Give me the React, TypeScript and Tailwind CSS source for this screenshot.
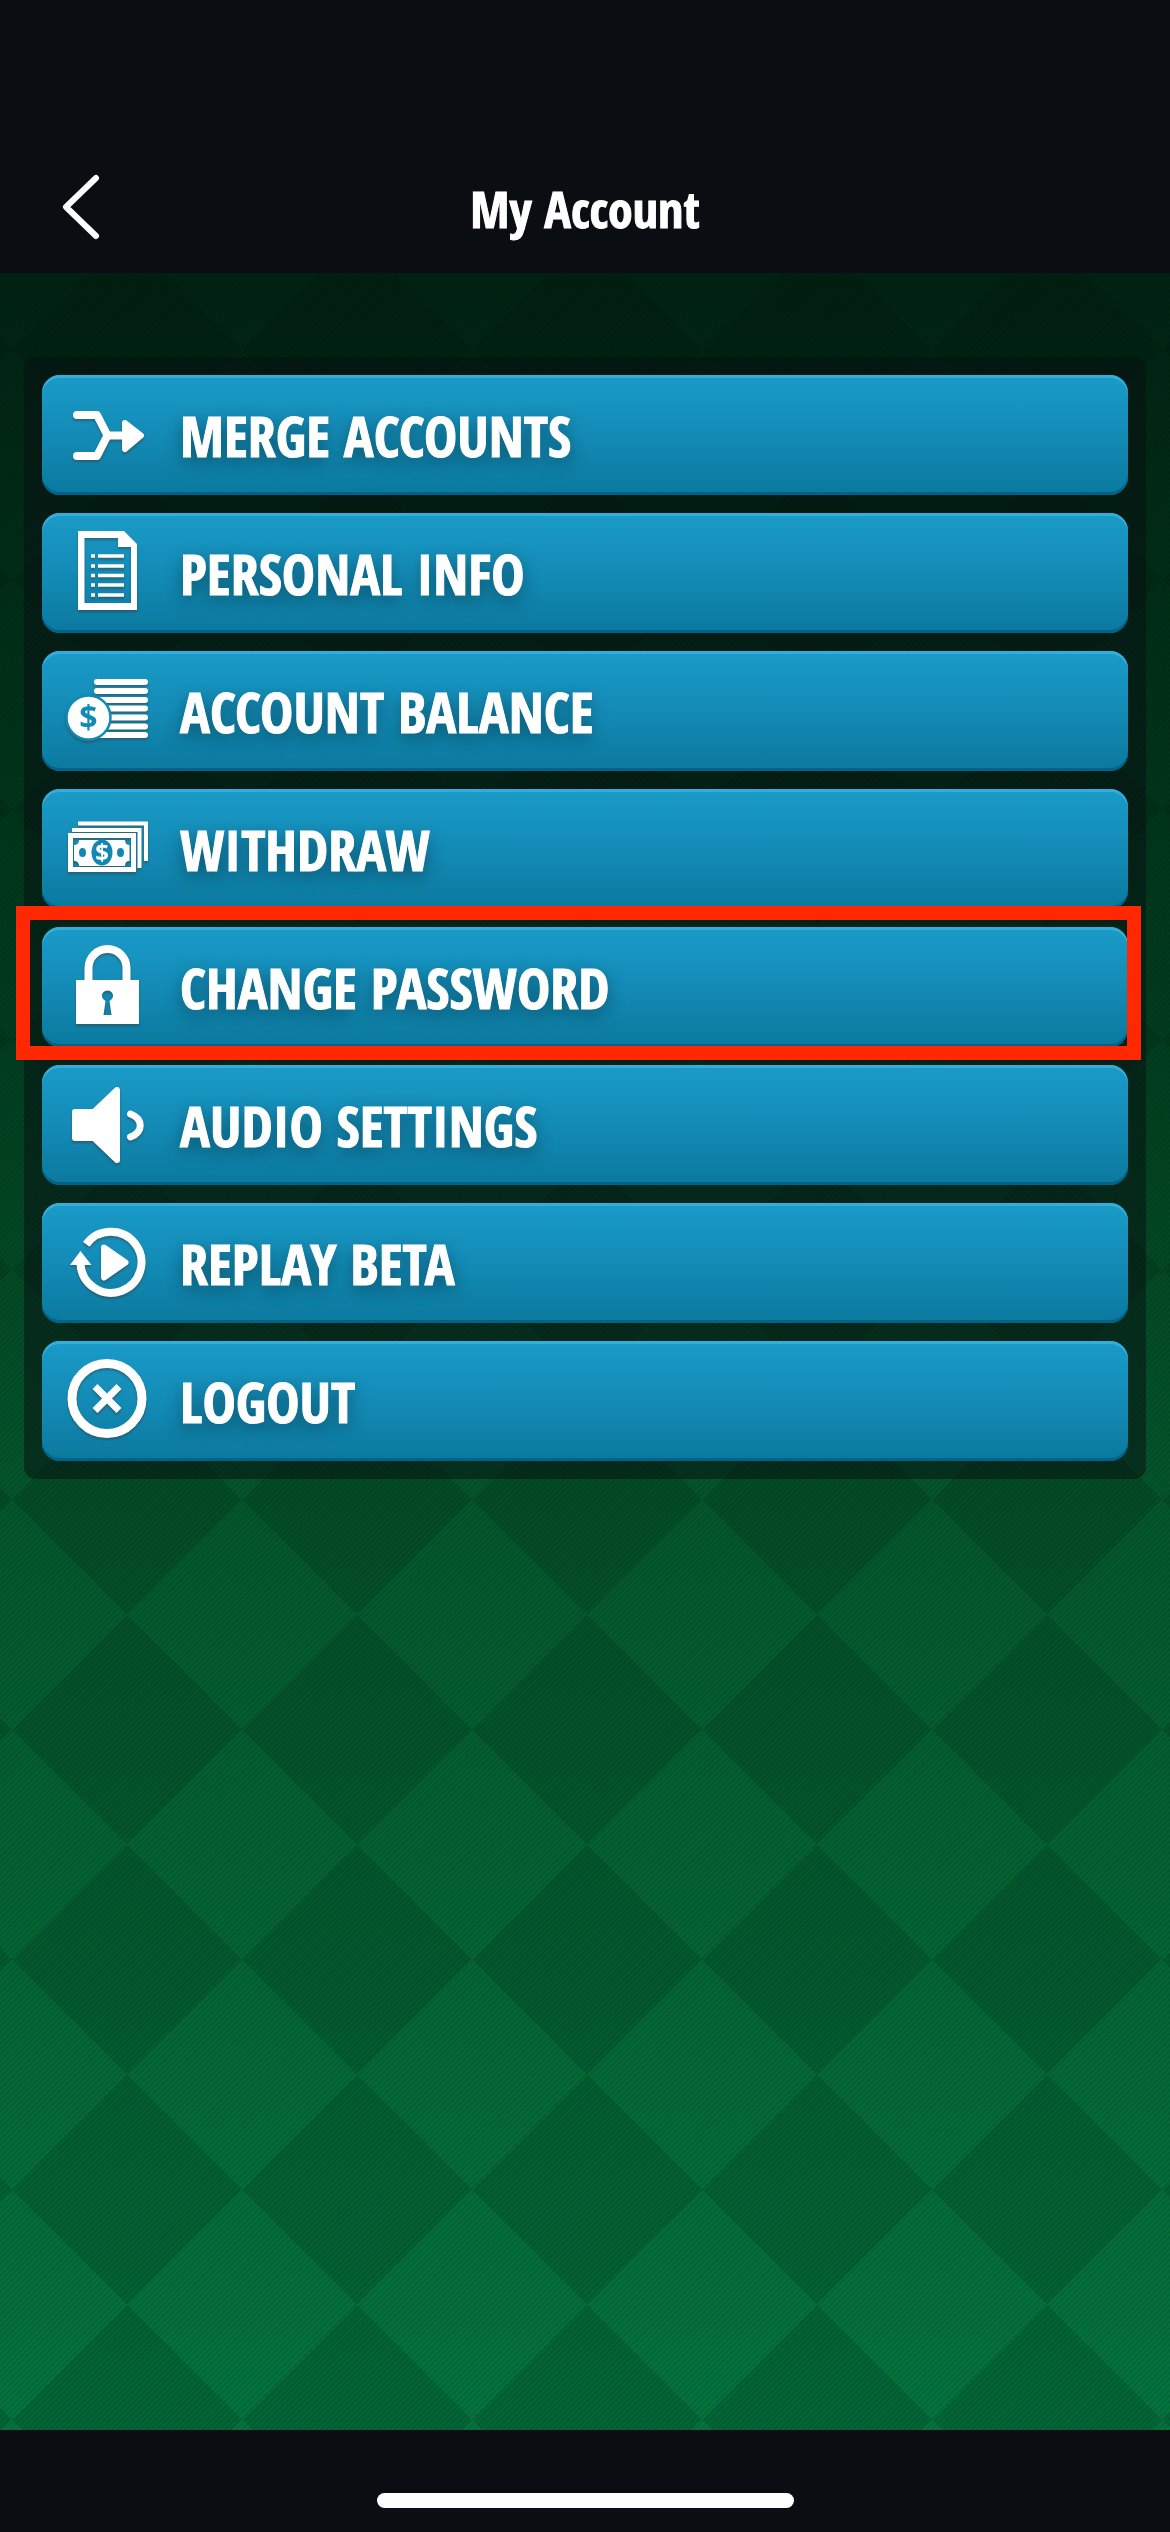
import type {ReactNode} from "react";

function Icon({children}: {children: ReactNode}) {
    return (
        <svg viewBox="0 0 80 80" fill="none" stroke="none" aria-hidden="true" className="mb-1 size-20 shrink-0 overflow-visible drop-shadow-[0_2px_1px_rgba(60,60,60,0.5)]">
            {children}
        </svg>
    )
}

function MergeIcon() {
    return (
        <Icon>
            <path d="M9 22H29L39.5 42.5L29 63H9M39.5 42.5H56" stroke="white" strokeWidth="8" strokeLinecap="round" strokeLinejoin="round" />
            <path d="M57 30L73 42.5L57 56Z" fill="white" stroke="white" strokeWidth="6" strokeLinejoin="round" />
        </Icon>
    )
}

function DocumentIcon() {
    return (
        <Icon>
            <path fillRule="evenodd" d="M10 0H56L69 13V79H10ZM16.5 7V72H63V16H50V7Z" fill="white" />
            <path d="M23 25H27M23 35H27M23 44.5H27M23 54H27M23 64H27M30 25H56M30 35H56M30 44.5H56M30 54H56M30 64H56" stroke="white" strokeWidth="3.5" />
        </Icon>
    )
}

function BalanceIcon() {
    return (
        <Icon>
            <path d="M29 13H77M29 22H77M29 31H77M29 39.5H77M29 48.5H77M29 57.5H77M29 66H77" stroke="white" strokeWidth="6" strokeLinecap="round" />
            <circle cx="20.5" cy="48.5" r="22" fill="white" stroke="#128ab5" strokeWidth="2.5" />
            <text x="20.5" y="60" textAnchor="middle" fill="#128ab5" className="font-['Open_Sans'] text-[32px] font-bold">$</text>
        </Icon>
    )
}

function WithdrawIcon() {
    return (
        <Icon>
            <path d="M10 16.5H78V54M4 23H71.5V61" stroke="white" strokeWidth="4" />
            <path fillRule="evenodd" d="M0 26H68V65H0ZM5 31V60H63V31Z" fill="white" />
            <path d="M11 33H57Q57 38 61.5 38V54Q57 54 57 59H11Q11 54 6 54V38Q11 38 11 33Z" fill="white" />
            <ellipse cx="34" cy="45.5" rx="10.5" ry="13" fill="#1187b1" />
            <ellipse cx="14.5" cy="45.5" rx="3.5" ry="4.5" fill="#1187b1" />
            <ellipse cx="52.5" cy="45.5" rx="3.5" ry="4.5" fill="#1187b1" />
            <text x="34" y="54" textAnchor="middle" fill="white" className="font-['Open_Sans'] text-[24px] font-bold">$</text>
        </Icon>
    )
}

function LockIcon() {
    return (
        <Icon>
            <path d="M20.5 37V23A19 19 0 0 1 58.5 23V37" stroke="white" strokeWidth="8" />
            <path fillRule="evenodd" d="M8 35H71V79H8ZM37.5 56L35.5 70H43.5L41.5 56A5.5 5.5 0 1 0 37.5 56Z" fill="white" />
        </Icon>
    )
}

function AudioIcon() {
    return (
        <Icon>
            <path d="M7 29H26L49 7V77L26 55H7Z" fill="white" stroke="white" strokeWidth="6" strokeLinejoin="round" />
            <path d="M62.5 31C75.5 36 75.5 49 62.5 54" stroke="white" strokeWidth="7" strokeLinecap="round" />
        </Icon>
    )
}

function ReplayIcon() {
    return (
        <Icon>
            <path d="M18.3 23.3A30.5 30.5 0 1 1 12.5 43" stroke="white" strokeWidth="8" />
            <path d="M12.5 30L23.5 44H2Z" fill="white" />
            <path d="M36 26.5L57.5 41.5L36 56.5Z" fill="white" stroke="white" strokeWidth="6" strokeLinejoin="round" />
        </Icon>
    )
}

function LogoutIcon() {
    return (
        <Icon>
            <circle cx="39" cy="39.5" r="35" stroke="white" strokeWidth="9" />
            <path d="M29.5 30L48.5 49M48.5 30L29.5 49" stroke="white" strokeWidth="7" strokeLinecap="square" />
        </Icon>
    )
}

const menuItems = [
    {label: "MERGE ACCOUNTS", icon: <MergeIcon />},
    {label: "PERSONAL INFO", icon: <DocumentIcon />},
    {label: "ACCOUNT BALANCE", icon: <BalanceIcon />},
    {label: "WITHDRAW", icon: <WithdrawIcon />},
    {label: "CHANGE PASSWORD", icon: <LockIcon />, highlighted: true},
    {label: "AUDIO SETTINGS", icon: <AudioIcon />},
    {label: "REPLAY BETA", icon: <ReplayIcon />},
    {label: "LOGOUT", icon: <LogoutIcon />},
];

function MenuButton({label, icon}: {label: string, icon: ReactNode}) {
    return (
        <button className="flex h-[120px] w-full cursor-pointer items-center gap-8 rounded-[18px] bg-linear-to-b from-[#1a9bc8] via-[#138bb6] to-[#0b799e] pl-[26px] text-left shadow-[inset_0_3px_0_#33aedb,inset_0_-3px_0_#02628a]">
            {icon}
            <span className="text-[56px] leading-none font-extrabold text-white [-webkit-text-stroke:1px_white] [text-shadow:0_6px_18px_rgba(0,0,0,0.4)]">{label}</span>
        </button>
    )
}

export default function App() {
    return (
        <div className="flex min-h-screen flex-col bg-[#0a0d12] font-['Open_Sans_Condensed','Open_Sans',sans-serif] text-white select-none">

            <header className="grid h-[273px] grid-cols-[1fr_auto_1fr] items-center px-[60px] pt-36">
                <button aria-label="Back" className="cursor-pointer justify-self-start">
                    <svg viewBox="0 0 42 68" fill="none" stroke="white" strokeWidth="6" strokeLinecap="round" strokeLinejoin="round" className="mb-1 h-[68px] w-[42px]">
                        <path d="M36 5L6 34L36 63" />
                    </svg>
                </button>
                <h1 className="text-[50px] leading-none font-extrabold [-webkit-text-stroke:1px_white]">My Account</h1>
            </header>

            {/* felt: fine diagonal weave, diamond check, dark-to-light fade */}
            <main className="flex-1 bg-[repeating-linear-gradient(135deg,rgba(0,0,0,0.16)_0px,rgba(0,0,0,0)_2px,rgba(0,0,0,0.16)_4px),linear-gradient(45deg,rgba(0,10,5,0.13)_25%,transparent_25%,transparent_75%,rgba(0,10,5,0.13)_75%),linear-gradient(-45deg,rgba(0,10,5,0.13)_25%,transparent_25%,transparent_75%,rgba(0,10,5,0.13)_75%),linear-gradient(to_bottom,#002413,#003f1f_35%,#045a2e_58%,#047840)] bg-size-[auto,230px_230px,230px_230px,auto] bg-position-[0_0,127px_77px,127px_77px,0_0] px-6 pt-[84px] pb-24">
                <ul className="flex flex-col gap-[18px] rounded-xl bg-[#080e12]/50 p-[18px]">
                    {menuItems.map((item) => (
                        <li key={item.label} className="relative">
                            <MenuButton label={item.label} icon={item.icon} />
                            {item.highlighted ?
                            <div className="pointer-events-none absolute -top-[21px] -right-[13px] -bottom-[13px] -left-[26px] border-[14px] border-[#ff2800]" />
                            : null}
                        </li>
                    ))}
                </ul>
            </main>

            <footer className="flex h-[102px] items-end justify-center pb-6">
                <div className="h-[15px] w-[417px] rounded-full bg-white" />
            </footer>
        </div>
    )
}
